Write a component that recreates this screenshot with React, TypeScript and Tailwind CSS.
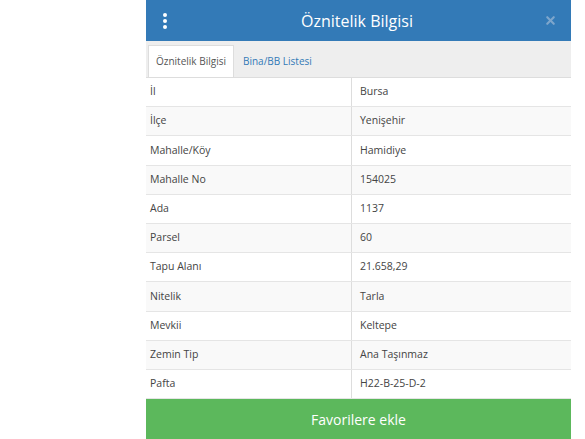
import { X } from 'lucide-react'

const rows = [
  { label: 'İl', value: 'Bursa' },
  { label: 'İlçe', value: 'Yenişehir' },
  { label: 'Mahalle/Köy', value: 'Hamidiye' },
  { label: 'Mahalle No', value: '154025' },
  { label: 'Ada', value: '1137' },
  { label: 'Parsel', value: '60' },
  { label: 'Tapu Alanı', value: '21.658,29' },
  { label: 'Nitelik', value: 'Tarla' },
  { label: 'Mevkii', value: 'Keltepe' },
  { label: 'Zemin Tip', value: 'Ana Taşınmaz' },
  { label: 'Pafta', value: 'H22-B-25-D-2' },
]

export default function App() {
  return (
    <div className="h-[439px] w-[585px] overflow-hidden bg-white font-['Open_Sans',sans-serif]">
      <div className="ml-[146px] flex h-full w-[425px] flex-col">
        {/* Header */}
        <header className="flex h-[41px] shrink-0 items-center bg-[#337ab7] px-[14px] text-white">
          <div className="flex w-[10px] flex-col items-center gap-[2px]">
            <span className="h-[4px] w-[4px] rounded-full bg-white" />
            <span className="h-[4px] w-[4px] rounded-full bg-white" />
            <span className="h-[4px] w-[4px] rounded-full bg-white" />
          </div>
          <h1 className="flex-1 text-center text-[16px] font-normal">Öznitelik Bilgisi</h1>
          <X className="h-[13px] w-[13px] text-[#7ea6cc]" strokeWidth={4} />
        </header>

        {/* Tabs */}
        <nav className="flex h-[37px] shrink-0 items-end border-b border-[#ddd] bg-[#eeeeee] pl-[2px]">
          <div className="flex h-[32px] items-center border border-b-0 border-[#ddd] bg-white px-[7px] text-[10px] text-[#555]">
            Öznitelik Bilgisi
          </div>
          <div className="flex h-[32px] items-center px-[9px] text-[10px] text-[#337ab7]">Bina/BB Listesi</div>
        </nav>

        {/* Table */}
        <div className="flex flex-1 flex-col">
          {rows.map((row, i) => (
            <div
              key={row.label}
              className={`flex h-[29.2px] items-center border-b border-[#e5e5e5] text-[10.5px] text-[#444] ${
                i % 2 === 1 ? 'bg-[#f9f9f9]' : 'bg-white'
              }`}
            >
              <div className="flex h-full w-[206px] items-center border-r border-[#ddd] pl-[4px]">{row.label}</div>
              <div className="pl-[8px]">{row.value}</div>
            </div>
          ))}
        </div>

        {/* Add to favorites */}
        <button className="flex h-[40px] shrink-0 items-center justify-center bg-[#5cb85c] text-[14px] text-white">
          Favorilere ekle
        </button>
      </div>
    </div>
  )
}
